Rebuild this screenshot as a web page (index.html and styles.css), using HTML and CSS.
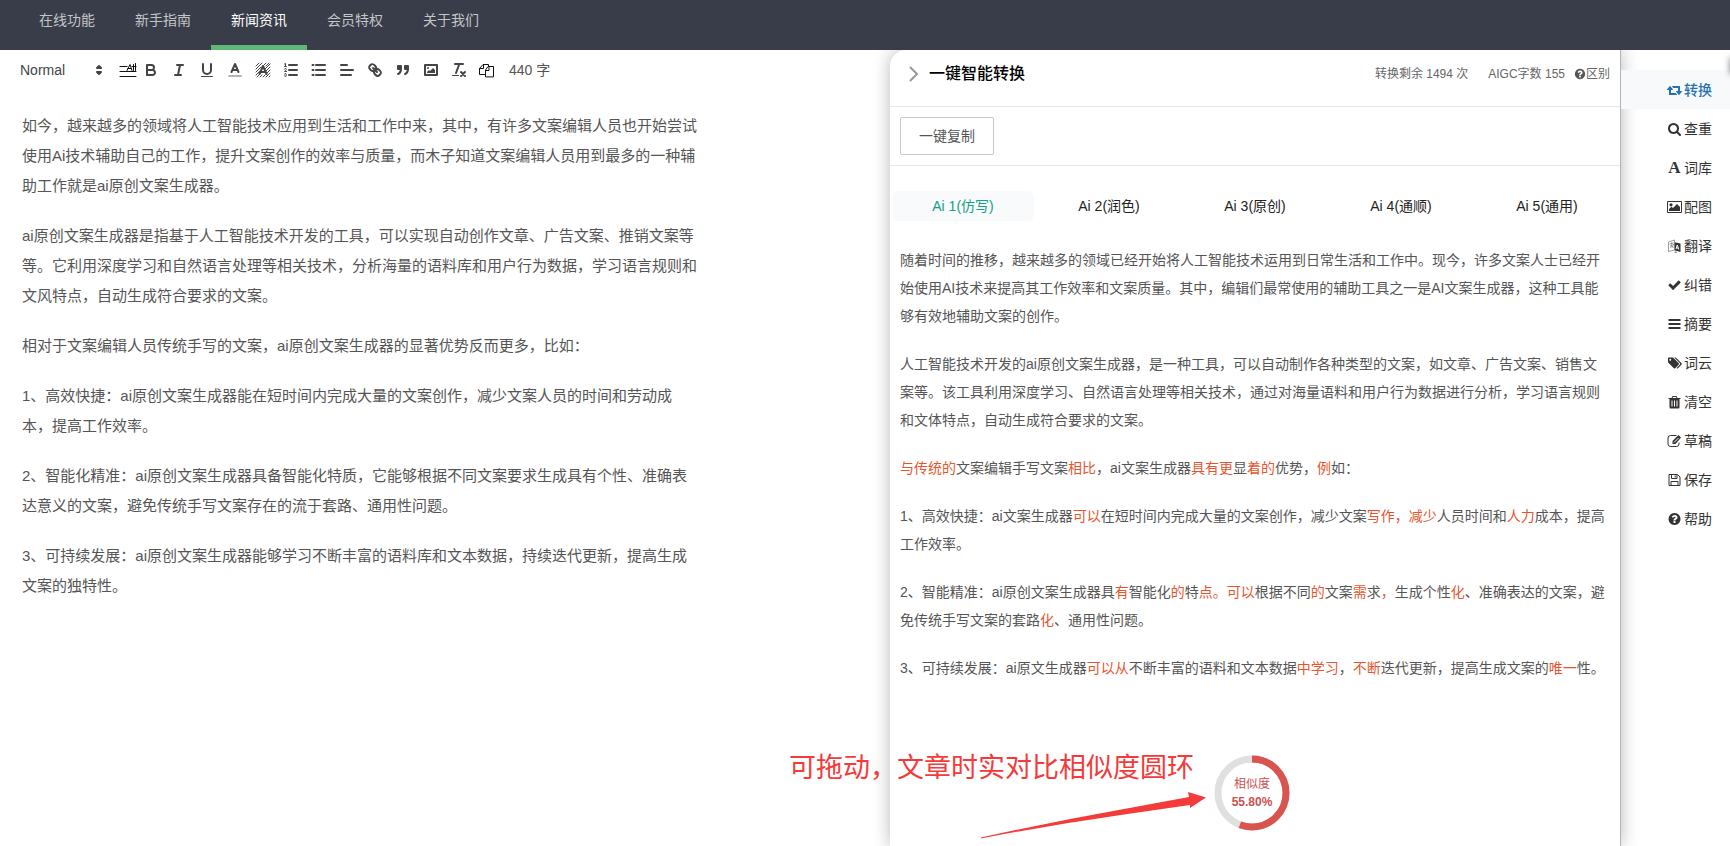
FILE: index.html
```html
<!DOCTYPE html>
<html lang="zh-CN">
<head>
<meta charset="utf-8">
<title>一键智能转换</title>
<link rel="stylesheet" href="styles.css">
</head>
<body>
<header class="topbar">
  <nav class="nav">
    <a class="nav-link" href="#">在线功能</a>
    <a class="nav-link" href="#">新手指南</a>
    <a class="nav-link is-active" href="#">新闻资讯</a>
    <a class="nav-link" href="#">会员特权</a>
    <a class="nav-link" href="#">关于我们</a>
  </nav>
</header>

<main class="workspace">
  <section class="editor">
    <div class="toolbar">
      <div class="picker">
        <select class="picker-select" aria-label="标题格式"><option>Normal</option></select>
        <svg class="picker-arrows" viewBox="0 0 18 18"><path class="solid" d="M7 11 9 13 11 11ZM7 7 9 5 11 7Z"/></svg>
      </div>
      <button class="tool tool-height" aria-label="行高"><svg viewBox="0 0 18 18"><path class="thin" d="M1 5.500H8M1 10.500H17M1 15.500H17M8 9.500 11 3.500 13 9.500M9 7.500H12M14.500 3.500V9.500M16.500 2.500V9.500M13 5.500H17"/></svg></button>
      <button class="tool" aria-label="加粗"><svg viewBox="0 0 18 18"><path d="M5,4H9.5A2.5,2.5,0,0,1,12,6.5v0A2.5,2.5,0,0,1,9.5,9H5V4M5,9h5.5A2.5,2.5,0,0,1,13,11.5v0A2.5,2.5,0,0,1,10.5,14H5V9"/></svg></button>
      <button class="tool" aria-label="斜体"><svg viewBox="0 0 18 18"><path d="M7 4H13M5 14H11M8 14 10 4"/></svg></button>
      <button class="tool" aria-label="下划线"><svg viewBox="0 0 18 18"><path d="M5,3V9a4.012,4.012,0,0,0,4,4H9a4.012,4.012,0,0,0,4-4V3"/><rect class="fill" x="3" y="15" width="12" height="1" rx=".5"/></svg></button>
      <button class="tool" aria-label="文字颜色"><svg viewBox="0 0 18 18"><path class="faint" d="M3 15H15"/><path d="M5.500 11 9 3 12.500 11M11.630 9H6.380"/></svg></button>
      <button class="tool" aria-label="背景颜色"><svg viewBox="0 0 18 18"><path class="thin" d="M2 5 5 2M2 8 8 2M2 11 7 6M2 14 6 10M3 16 6 13M6 16 8 14M9 16 11 14M12 16 16 12M15 16 16 15M13 12 16 9M12 10 16 6M11 8 16 3M10 4 12 2M12 5 15 2"/><path d="M5.500 13 9 5 12.500 13M11.630 11H6.380"/></svg></button>
      <button class="tool" aria-label="有序列表"><svg viewBox="0 0 18 18"><path d="M7 4H15M7 9H15M7 14H15"/><path class="thin" d="M2.500 5.500H4.500M3.500 5.500V2.500L2.500 3M4.500,10.500h-2c0-.234,1.850-1.076,1.850-2.234A0.959,0.959,0,0,0,2.500,8.156M2.500,14.846a0.959,0.959,0,0,0,1.850-.109A0.700,0.700,0,0,0,3.750,14a0.688,0.688,0,0,0,.6-0.736,0.959,0.959,0,0,0-1.850-.109"/></svg></button>
      <button class="tool" aria-label="无序列表"><svg viewBox="0 0 18 18"><path d="M6 4H15M6 9H15M6 14H15M2.500 4H3.500M2.500 9H3.500M2.500 14H3.500"/></svg></button>
      <button class="tool" aria-label="对齐"><svg viewBox="0 0 18 18"><path d="M3 4H9M3 9H15M3 14H13"/></svg></button>
      <button class="tool" aria-label="链接"><svg viewBox="0 0 18 18"><path d="M7 7 11 11M8.9,4.577a3.476,3.476,0,0,1,.36,4.679A3.476,3.476,0,0,1,4.577,8.9C3.185,7.5,2.035,6.4,4.217,4.217S7.5,3.185,8.9,4.577ZM13.423,9.1a3.476,3.476,0,0,0-4.679-.36,3.476,3.476,0,0,0,.36,4.679c1.392,1.392,2.5,2.542,4.679.36S14.815,10.5,13.423,9.1Z"/></svg></button>
      <button class="tool" aria-label="引用"><svg viewBox="0 0 18 18"><path class="solid" d="M4 5H7V8H4ZM11 5H14V8H11ZM7,8c0,4.031-3,5-3,5M14,8c0,4.031-3,5-3,5"/></svg></button>
      <button class="tool" aria-label="图片"><svg viewBox="0 0 18 18"><rect x="3" y="4" width="12" height="10"/><circle class="fill" cx="6" cy="7" r="1"/><path class="fill" d="M5 12V11L7 9 8 10 11 7 13 9V12Z"/></svg></button>
      <button class="tool" aria-label="清除格式"><svg viewBox="0 0 18 18"><path d="M5 3H13M6 12 9.350 3M11 11 15 15M15 11 11 15"/><rect class="fill" x="2" y="14" width="7" height="1" rx=".5"/></svg></button>
      <button class="tool tool-copy" aria-label="复制"><svg viewBox="0 0 18 18"><path class="thin" d="M6.500 13.500H1.500V7.500L5 3.500H10.500V5.500M1.500 7.500H5.500V3.500M7.500 15.500V9L10 5.500H15.500V15.500ZM7.500 9.500H11V5.500"/></svg></button>
      <span class="word-count">440 字</span>
    </div>
    <article class="draft">
      <p>如今，越来越多的领域将人工智能技术应用到生活和工作中来，其中，有许多文案编辑人员也开始尝试使用Ai技术辅助自己的工作，提升文案创作的效率与质量，而木子知道文案编辑人员用到最多的一种辅助工作就是ai原创文案生成器。</p>
      <p>ai原创文案生成器是指基于人工智能技术开发的工具，可以实现自动创作文章、广告文案、推销文案等等。它利用深度学习和自然语言处理等相关技术，分析海量的语料库和用户行为数据，学习语言规则和文风特点，自动生成符合要求的文案。</p>
      <p>相对于文案编辑人员传统手写的文案，ai原创文案生成器的显著优势反而更多，比如：</p>
      <p>1、高效快捷：ai原创文案生成器能在短时间内完成大量的文案创作，减少文案人员的时间和劳动成本，提高工作效率。</p>
      <p>2、智能化精准：ai原创文案生成器具备智能化特质，它能够根据不同文案要求生成具有个性、准确表达意义的文案，避免传统手写文案存在的流于套路、通用性问题。</p>
      <p>3、可持续发展：ai原创文案生成器能够学习不断丰富的语料库和文本数据，持续迭代更新，提高生成文案的独特性。</p>
    </article>
  </section>

  <section class="panel">
    <div class="panel-head">
      <button class="collapse" aria-label="收起"><svg viewBox="0 0 10 16"><path d="M1 1 8 8 1 15"/></svg></button>
      <h1 class="panel-title">一键智能转换</h1>
      <span class="quota">转换剩余 1494 次</span>
      <span class="quota">AIGC字数 155</span>
      <a class="diff-link" href="#"><svg class="fa" viewBox="0 0 1792 1792"><use href="#i-help"/></svg>区别</a>
    </div>
    <div class="panel-actions"><button class="copy-btn">一键复制</button></div>
    <div class="tabs" role="tablist">
      <button class="tab is-active" role="tab" aria-selected="true">Ai 1(仿写)</button>
      <button class="tab" role="tab">Ai 2(润色)</button>
      <button class="tab" role="tab">Ai 3(原创)</button>
      <button class="tab" role="tab">Ai 4(通顺)</button>
      <button class="tab" role="tab">Ai 5(通用)</button>
    </div>
    <article class="result">
      <p>随着时间的推移，越来越多的领域已经开始将人工智能技术运用到日常生活和工作中。现今，许多文案人士已经开始使用AI技术来提高其工作效率和文案质量。其中，编辑们最常使用的辅助工具之一是AI文案生成器，这种工具能够有效地辅助文案的创作。</p>
      <p>人工智能技术开发的ai原创文案生成器，是一种工具，可以自动制作各种类型的文案，如文章、广告文案、销售文案等。该工具利用深度学习、自然语言处理等相关技术，通过对海量语料和用户行为数据进行分析，学习语言规则和文体特点，自动生成符合要求的文案。</p>
      <p><em>与传统的</em>文案编辑手写文案<em>相比</em>，ai文案生成器<em>具有更</em>显<em>着的</em>优势，<em>例</em>如：</p>
      <p>1、高效快捷：ai文案生成器<em>可以</em>在短时间内完成大量的文案创作，减少文案<em>写作，减少</em>人员时间和<em>人力</em>成本，提高工作效率。</p>
      <p>2、智能精准：ai原创文案生成器具<em>有</em>智能化<em>的</em>特<em>点。可以</em>根据不同<em>的</em>文案<em>需</em>求<em>，</em>生成个性<em>化</em>、准确表达的文案，避免传统手写文案的套路<em>化</em>、通用性问题。</p>
      <p>3、可持续发展：ai原文生成器<em>可以从</em>不断丰富的语料和文本数据<em>中学习</em>，<em>不断</em>迭代更新，提高生成文案的<em>唯一</em>性。</p>
    </article>

    <div class="ring">
      <svg class="ring-chart" viewBox="0 0 76 76">
        <circle class="ring-track" cx="38" cy="38" r="34"/>
        <circle class="ring-value" cx="38" cy="38" r="34" pathLength="100" stroke-dasharray="55.8 44.2" transform="rotate(-90 38 38)"/>
      </svg>
      <span class="ring-label">相似度</span>
      <strong class="ring-number">55.80%</strong>
    </div>
    <p class="note">可拖动，文章时实对比相似度圆环</p>
    <svg class="note-arrow" viewBox="0 0 226 48"><path d="M0 46.500Q70 31 143 18L208 6 207 1 225 6.500 209 17V14L143 23.500Q70 34 0 47.500Z"/></svg>
  </section>

  <aside class="side">
    <button class="side-item is-active"><svg class="fa" viewBox="0 0 1920 1792"><path d="M1280 1504q0 13-9.500 22.500t-22.500 9.500h-960q-8 0-13.500-2t-9-7-5.500-8-3-11.500-1-11.500v-600h-192q-26 0-45-19t-19-45q0-24 15-41l320-384q19-22 49-22t49 22l320 384q15 17 15 41 0 26-19 45t-45 19h-192v384h576q16 0 25 11l160 192q7 10 7 21zm640-416q0 24-15 41l-320 384q-20 23-49 23t-49-23l-320-384q-15-17-15-41 0-26 19-45t45-19h192v-384h-576q-16 0-25-12l-160-192q-7-9-7-20 0-13 9.500-22.500t22.500-9.500h960q8 0 13.500 2t9 7 5.500 8 3 11.500 1 11.500v600h192q26 0 45 19t19 45z"/></svg>转换</button>
    <button class="side-item"><svg class="fa" viewBox="0 0 1792 1792"><path d="M1216 832q0-185-131.500-316.500t-316.500-131.500-316.500 131.500-131.500 316.500 131.500 316.500 316.500 131.500 316.500-131.500 131.500-316.500zm512 832q0 52-38 90t-90 38q-54 0-90-38l-343-342q-179 124-399 124-143 0-273.500-55.500t-225-150-150-225-55.500-273.500 55.500-273.500 150-225 225-150 273.500-55.500 273.500 55.500 225 150 150 225 55.500 273.500q0 220-124 399l343 343q37 37 37 90z"/></svg>查重</button>
    <button class="side-item"><span class="fa fa-letter" aria-hidden="true">A</span>词库</button>
    <button class="side-item"><svg class="fa" viewBox="0 0 15 14"><path fill-rule="evenodd" d="M1 1H14Q15 1 15 2V12Q15 13 14 13H1Q0 13 0 12V2Q0 1 1 1ZM1 2V12H14V2Z"/><circle cx="4" cy="4.800" r="1.600"/><path d="M2 11V9L4.500 6.700 6 8 10 4 13 7V11Z"/></svg>配图</button>
    <button class="side-item"><svg class="fa" viewBox="0 0 14 14"><path d="M6 3 13 4.500V13L6 11Z"/><path d="M1 3 7 1V11L1 12.500Z" fill="#fff" stroke="#777" stroke-width=".7"/><path d="M2 5 6 4M4 3.500 4.500 5 3 9M3 6 6 9M6 5 5 8" fill="none" stroke="#777" stroke-width=".8"/><path d="M8.500 10 9.800 6 11.300 10.500M9 8.800 11 9.200" fill="none" stroke="#fff"/><path d="M7 13 9 13.500 8.500 12.500" fill="none" stroke="#777"/></svg>翻译</button>
    <button class="side-item"><svg class="fa" viewBox="0 0 1792 1792"><path d="M1671 566q0 40-28 68l-724 724-136 136q-28 28-68 28t-68-28l-136-136-362-362q-28-28-28-68t28-68l136-136q28-28 68-28t68 28l294 295 656-657q28-28 68-28t68 28l136 136q28 28 28 68z"/></svg>纠错</button>
    <button class="side-item"><svg class="fa" viewBox="0 0 14 14"><path d="M1 2H13V4H1ZM1 6H13V8H1ZM1 10H13V12H1Z"/></svg>摘要</button>
    <button class="side-item"><svg class="fa" viewBox="0 0 2048 1792"><path d="M576 448q0-53-37.500-90.500t-90.500-37.500-90.500 37.500-37.500 90.500 37.500 90.500 90.500 37.500 90.500-37.500 37.500-90.500zm1067 576q0 53-37 90l-491 492q-39 37-91 37-53 0-90-37l-715-716q-38-37-64.500-101t-26.500-117v-416q0-52 38-90t90-38h416q53 0 117 26.500t102 64.500l715 714q37 39 37 91zm384 0q0 53-37 90l-491 492q-39 37-91 37-36 0-59-14t-53-45l470-470q37-37 37-90 0-52-37-91l-715-714q-38-38-102-64.500t-117-26.500h224q53 0 117 26.500t102 64.500l715 714q37 39 37 91z"/></svg>词云</button>
    <button class="side-item"><svg class="fa" viewBox="0 0 14 14"><path fill-rule="evenodd" d="M5 1H9L10 3H13V4H12V12Q12 13.500 11 13.500H3Q2 13.500 2 12V4H1V3H4ZM5.500 2 5 3H9L8.500 2ZM4 5.500V11.500H5V5.500ZM6.500 5.500V11.500H7.500V5.500ZM9 5.500V11.500H10V5.500Z"/></svg>清空</button>
    <button class="side-item"><svg class="fa" viewBox="0 0 14 14"><path class="outline" d="M9 1.500H3Q.5 1.500 .5 4V10Q.5 12.500 3 12.500H9Q11.500 12.500 11.500 10V8.500"/><path d="M5 10V7L11 1 13.500 3.500 8 10Z"/><path class="cut" d="M6.500 8.500 11 4"/></svg>草稿</button>
    <button class="side-item"><svg class="fa" viewBox="0 0 14 14"><path class="outline" d="M1.500 1.500H10L12.500 4V12.500H1.500ZM4 1.500V5.500H9.500V1.500M3.500 12.500V8.500H10.500V12.500M7.700 2.500V4.500"/></svg>保存</button>
    <button class="side-item"><svg class="fa" viewBox="0 0 1792 1792"><path id="i-help" d="M1024 1376v-192q0-14-9-23t-23-9h-192q-14 0-23 9t-9 23v192q0 14 9 23t23 9h192q14 0 23-9t9-23zm256-672q0-88-55.500-163t-138.500-116-170-41q-243 0-371 213-15 24 8 42l132 100q7 6 19 6 16 0 25-12 53-68 86-92 34-24 86-24 48 0 85.500 26t37.500 59q0 38-20 61t-68 45q-63 28-115.500 86.500t-52.500 125.500v36q0 14 9 23t23 9h192q14 0 23-9t9-23q0-19 21.500-49.500t54.500-49.500q32-18 49-28.500t46-35 44.500-48 28-60.500 12.500-81zm384 192q0 209-103 385.500t-279.500 279.500-385.500 103-385.500-103-279.500-279.500-103-385.500 103-385.500 279.500-279.500 385.500-103 385.500 103 279.500 279.500 103 385.500z"/></svg>帮助</button>
  </aside>
</main>
</body>
</html>
```

FILE: styles.css
```css
* {
  box-sizing: border-box;
}

body {
  margin: 0;
  min-height: 100vh;
  display: flex;
  flex-direction: column;
  overflow-x: hidden;
  background: #fff;
  color: #444;
  font: 14px/20px "Liberation Sans", "Noto Sans CJK SC", sans-serif;
}

button,
select {
  margin: 0;
  padding: 0;
  border: 0;
  background: none;
  color: inherit;
  font: inherit;
  cursor: pointer;
}

a {
  color: inherit;
  text-decoration: none;
}

/* Top navigation */
.topbar {
  background: #393d49;
  padding-left: 19px;
}

.nav {
  display: flex;
}

.nav-link {
  height: 50px;
  padding: 0 20px;
  border-bottom: 5px solid transparent;
  color: #c3c5c8;
  line-height: 40px;
}

.nav-link.is-active {
  border-bottom-color: #5fb878;
  color: #fff;
}

.workspace {
  flex: 1;
  display: grid;
  grid-template-columns: minmax(0, 1fr) 731px 109px;
}

/* Editor */
.toolbar {
  display: flex;
  align-items: center;
  height: 40px;
  padding-left: 12px;
}

.picker {
  position: relative;
  width: 97px;
  height: 24px;
}

.picker-select {
  width: 100%;
  height: 24px;
  padding-left: 8px;
  appearance: none;
}

.picker-arrows {
  position: absolute;
  top: 3px;
  right: 1px;
  width: 18px;
  height: 18px;
  pointer-events: none;
}

.tool {
  display: flex;
  justify-content: center;
  width: 28px;
}

.tool svg {
  width: 18px;
  height: 18px;
}

.tool-height {
  justify-content: flex-end;
}

.toolbar svg {
  fill: none;
  stroke: #444;
  stroke-width: 2;
  stroke-linecap: round;
  stroke-linejoin: round;
}

.toolbar .thin {
  stroke-width: 1;
}

.toolbar .faint {
  opacity: 0.4;
}

.toolbar .fill {
  fill: #444;
  stroke: none;
}

.toolbar .solid {
  fill: #444;
}

.toolbar .tool-copy svg,
.toolbar .tool-height svg {
  stroke: #111;
}

.word-count {
  margin-left: 8px;
  color: #555;
}

.draft {
  max-width: 702px;
  padding: 21px 0 20px 22px;
  color: #555;
  font-size: 15px;
  line-height: 30px;
}

.draft p,
.result p {
  margin: 0 0 20px;
}

/* Conversion panel */
.panel {
  position: relative;
  border-right: 1px solid #b0b3b7;
  border-top-left-radius: 16px;
  background: #fff;
  box-shadow: 0 0 18px rgba(0, 0, 0, 0.28);
  clip-path: inset(0 -30px 0 -120px);
}

.panel-head {
  display: flex;
  align-items: center;
  height: 57px;
  padding: 0 10px 8px 19px;
  border-bottom: 1px solid #e4e6e8;
  color: #666;
  font-size: 12px;
}

.collapse svg {
  display: block;
  width: 10px;
  height: 16px;
  fill: none;
  stroke: #999;
  stroke-width: 2;
}

.panel-title {
  margin: 0 auto 0 10px;
  color: #000;
  font-size: 16px;
  font-weight: 500;
}

.quota {
  margin-left: 20px;
}

.diff-link {
  display: flex;
  align-items: center;
  margin-left: 9px;
}

.diff-link .fa {
  width: 12px;
  height: 12px;
  fill: #555;
}

.panel-actions {
  padding: 10px;
  border-bottom: 1px solid #e4e6e8;
}

.copy-btn {
  display: block;
  height: 38px;
  padding: 0 18px;
  border: 1px solid #c9c9c9;
  border-radius: 2px;
  color: #555;
}

.tabs {
  display: grid;
  grid-template-columns: repeat(5, 1fr);
  padding-top: 25px;
}

.tab {
  height: 30px;
  margin: 0 2px;
  border-radius: 6px;
  color: #222;
}

.tab.is-active {
  background: #f8fafb;
  color: #16a085;
}

.result {
  padding: 25px 10px 120px;
  color: #555;
  line-height: 28px;
}

.result em {
  color: #e8552d;
  font-style: normal;
}

/* Draggable similarity ring and its callout */
.ring {
  position: absolute;
  top: 705px;
  left: 324px;
  width: 76px;
  height: 76px;
  display: flex;
  flex-direction: column;
  align-items: center;
  justify-content: center;
  color: #c9514f;
  font-size: 12px;
  line-height: 18px;
}

.ring-chart {
  position: absolute;
  inset: 0;
  fill: none;
  stroke-width: 7;
}

.ring-track {
  stroke: #e0e0e0;
}

.ring-value {
  stroke: #d9534f;
}

.note {
  position: absolute;
  top: 698px;
  left: -101px;
  margin: 0;
  color: #f53a3a;
  font-size: 27px;
  line-height: 40px;
  white-space: nowrap;
}

.note-arrow {
  position: absolute;
  top: 741px;
  left: 91px;
  width: 226px;
  height: 48px;
  fill: #f53a3a;
}

/* Side tools */
.side {
  position: relative;
  overflow: hidden;
  padding-top: 20px;
}

/* Edge shadow of the drawer that is parked off the right side */
.side::after {
  content: "";
  position: absolute;
  top: 8px;
  left: 100%;
  width: 10px;
  height: 16px;
  box-shadow: 0 0 6px rgba(0, 0, 0, 0.5);
}

.side-item {
  display: flex;
  align-items: center;
  gap: 2px;
  width: 100%;
  height: 39px;
  padding-left: 46px;
  color: #333;
}

.side-item.is-active {
  background: #f7f9fb;
  color: #2672b0;
  font-weight: 500;
}

.fa {
  width: 15px;
  height: 14px;
  fill: currentColor;
}

.fa-letter {
  font: bold 17px/14px "Liberation Serif", serif;
  text-align: center;
}

.fa .outline {
  fill: none;
  stroke: currentColor;
}

.fa .cut {
  stroke: #fff;
}
```
